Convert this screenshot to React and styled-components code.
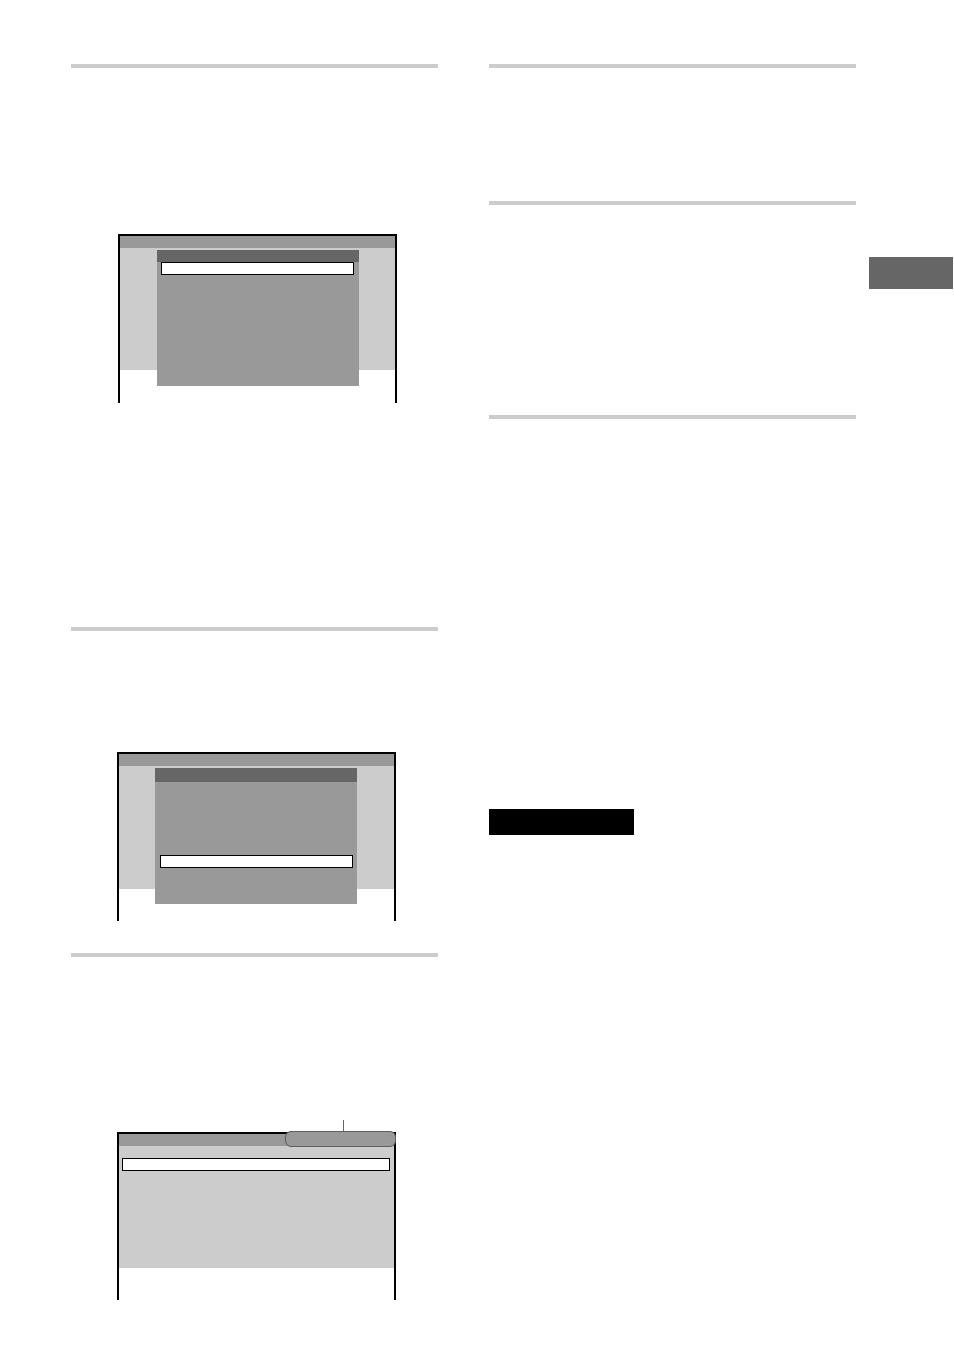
import React from 'react'
import styled, { createGlobalStyle } from 'styled-components'

const GlobalStyle = createGlobalStyle`
  html, body {
    margin: 0;
    padding: 0;
    background: #fff;
    font-family: "Liberation Sans", Arial, sans-serif;
  }
`

const Page = styled.div`
  width: 954px;
  height: 1351px;
  display: grid;
  grid-template-columns: 367px 367px 85px;
  column-gap: 51px;
  padding-left: 71px;
  box-sizing: border-box;
  & > :nth-child(3) {
    margin-left: -38px;
  }
`

const Column = styled.div`
  display: flex;
  flex-direction: column;
  padding-top: 64px;
`

const Rule = styled.div`
  height: 4px;
  background: #cccccc;
  margin-top: ${p => p.$top || 0}px;
`

const Screen = styled.div`
  position: relative;
  width: 279px;
  height: ${p => p.$h}px;
  margin-top: ${p => p.$top}px;
  margin-left: ${p => p.$left}px;
  border: 2px solid #000;
  border-bottom: none;
  box-sizing: border-box;
  display: flex;
  flex-direction: column;
`

const TopBar = styled.div`
  height: 12px;
  background: #999999;
  flex-shrink: 0;
`

const ScreenBody = styled.div`
  flex: 1;
  display: flex;
  flex-direction: column;
  background: linear-gradient(#cccccc 0 ${p => p.$band}px, #ffffff ${p => p.$band}px);
`

const Panel = styled.div`
  width: 202px;
  height: 136px;
  margin-top: 2px;
  margin-left: ${p => p.$left}px;
  background: #999999;
  display: flex;
  flex-direction: column;
`

const PanelHeader = styled.div`
  height: ${p => p.$h}px;
  background: #666666;
  flex-shrink: 0;
`

const Highlight = styled.div`
  width: ${p => p.$w}px;
  height: 13px;
  margin-top: ${p => p.$top}px;
  margin-left: ${p => p.$left}px;
  background: #fff;
  border: 1px solid #000;
  box-sizing: border-box;
`

const Pill = styled.div`
  position: absolute;
  top: -3px;
  right: -2px;
  width: 111px;
  height: 16px;
  border: 1.5px solid #5e5e5e;
  border-radius: 6px;
  background: #999999;
  box-sizing: border-box;
`

const Callout = styled.div`
  position: absolute;
  top: -14px;
  left: 224px;
  width: 1px;
  height: 11px;
  background: #666;
`

const NoteLabel = styled.div`
  width: 145px;
  height: 26px;
  background: #000;
  margin-top: 390px;
`

const SideTab = styled.div`
  width: 84px;
  height: 32px;
  margin-top: 257px;
  background: #666666;
`

export default function App() {
  return (
    <>
      <GlobalStyle />
      <Page>
        <Column>
          <Rule />
          <Screen $h={169} $top={166} $left={47}>
            <TopBar />
            <ScreenBody $band={122}>
              <Panel $left={37}>
                <PanelHeader $h={12} />
                <Highlight $w={193} $top={0} $left={4} />
              </Panel>
            </ScreenBody>
          </Screen>

          <Rule $top={224} />
          <Screen $h={169} $top={121} $left={46}>
            <TopBar />
            <ScreenBody $band={123}>
              <Panel $left={36}>
                <PanelHeader $h={14} />
                <Highlight $w={193} $top={73} $left={5} />
              </Panel>
            </ScreenBody>
          </Screen>

          <Rule $top={32} />
          <Screen $h={168} $top={175} $left={46}>
            <Callout />
            <Pill />
            <TopBar />
            <ScreenBody $band={122}>
              <Highlight $w={268} $top={12} $left={3} />
            </ScreenBody>
          </Screen>
        </Column>

        <Column>
          <Rule />
          <Rule $top={133} />
          <Rule $top={210} />
          <NoteLabel />
        </Column>

        <div>
          <SideTab />
        </div>
      </Page>
    </>
  )
}
